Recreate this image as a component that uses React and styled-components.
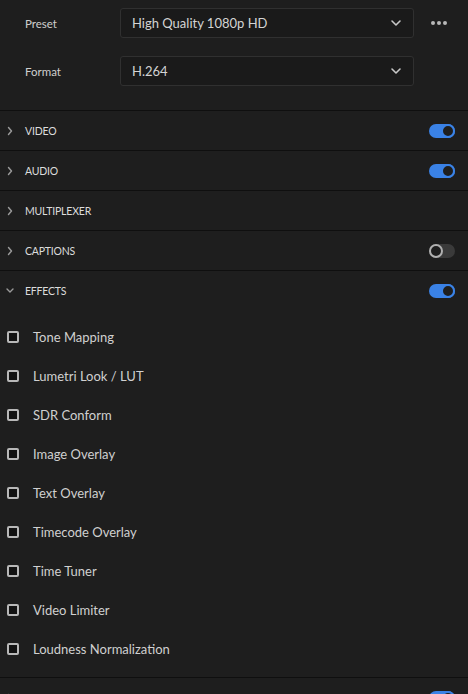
import React from 'react';
import styled, { createGlobalStyle } from 'styled-components';

const GlobalStyle = createGlobalStyle`
    html, body {
        margin: 0;
        padding: 0;
        background: #1e1e1e;
    }
    body {
        font-family: 'Lato', 'Open Sans', sans-serif;
        color: #d6d6d6;
    }
`;

const sections = [
    { name: 'VIDEO', toggle: true, on: true },
    { name: 'AUDIO', toggle: true, on: true },
    { name: 'MULTIPLEXER', toggle: false },
    { name: 'CAPTIONS', toggle: true, on: false },
];

const effects = [
    'Tone Mapping',
    'Lumetri Look / LUT',
    'SDR Conform',
    'Image Overlay',
    'Text Overlay',
    'Timecode Overlay',
    'Time Tuner',
    'Video Limiter',
    'Loudness Normalization',
];

const Chevron = ({ down }) => (
    <svg width="8" height="10" viewBox="0 0 8 10">
        {down
            ? <path d="M1 3l3 3 3-3" fill="none" stroke="#9a9a9a" strokeWidth="1.4" strokeLinecap="round" strokeLinejoin="round" />
            : <path d="M2.5 1.5l3 3.5-3 3.5" fill="none" stroke="#9a9a9a" strokeWidth="1.4" strokeLinecap="round" strokeLinejoin="round" />}
    </svg>
);

const SelectCaret = () => (
    <svg width="12" height="8" viewBox="0 0 12 8">
        <path d="M2 2l4 4 4-4" fill="none" stroke="#c8c8c8" strokeWidth="1.6" strokeLinecap="round" strokeLinejoin="round" />
    </svg>
);

const Dots = () => (
    <svg width="18" height="6" viewBox="0 0 18 6">
        <circle cx="3" cy="3" r="2" fill="#b8b8b8" />
        <circle cx="9" cy="3" r="2" fill="#b8b8b8" />
        <circle cx="15" cy="3" r="2" fill="#b8b8b8" />
    </svg>
);

const Field = ({ label, value, more }) => (
    <FieldRow>
        <FieldLabel>{label}</FieldLabel>
        <Select>
            <span>{value}</span>
            <SelectCaret />
        </Select>
        <More>{more && <Dots />}</More>
    </FieldRow>
);

const Section = ({ name, toggle, on, open }) => (
    <SectionHeader>
        <ChevronBox><Chevron down={open} /></ChevronBox>
        <SectionTitle>{name}</SectionTitle>
        {toggle && <Toggle $on={on}><Knob $on={on} /></Toggle>}
    </SectionHeader>
);

const App = () => {
    return (
        <>
            <GlobalStyle />
            <Panel>
                <Fields>
                    <Field label="Preset" value="High Quality 1080p HD" more />
                    <Field label="Format" value="H.264" />
                </Fields>
                {sections.map((s) => (
                    <Section key={s.name} {...s} />
                ))}
                <Section name="EFFECTS" toggle on open />
                <EffectList>
                    {effects.map((e) => (
                        <EffectItem key={e}>
                            <CheckBox />
                            <EffectLabel>{e}</EffectLabel>
                        </EffectItem>
                    ))}
                </EffectList>
                <Section name="" toggle on />
            </Panel>
        </>
    );
};

const Panel = styled.div`
    width: 468px;
    height: 694px;
    overflow: hidden;
    background: #1e1e1e;
`;

const Fields = styled.div`
    display: flex;
    flex-direction: column;
    gap: 18px;
    padding: 8px 0 24px 25px;
`;

const FieldRow = styled.div`
    display: flex;
    align-items: center;
    height: 30px;
`;

const FieldLabel = styled.div`
    width: 95px;
    font-size: 11.5px;
    color: #cfcfcf;
`;

const Select = styled.div`
    width: 294px;
    height: 30px;
    box-sizing: border-box;
    border: 1px solid #303030;
    border-radius: 3px;
    background: #1a1a1a;
    display: flex;
    align-items: center;
    justify-content: space-between;
    padding: 0 11px 0 11px;
    font-size: 13px;
    color: #d4d4d4;
`;

const More = styled.div`
    width: 50px;
    display: flex;
    justify-content: center;
    align-items: center;
`;

const SectionHeader = styled.div`
    display: flex;
    align-items: center;
    height: 39px;
    border-top: 1px solid #0f0f0f;
    padding: 0 13px 0 6px;
`;

const ChevronBox = styled.div`
    width: 19px;
    display: flex;
    align-items: center;
`;

const SectionTitle = styled.div`
    flex: 1;
    font-size: 10.5px;
    letter-spacing: -0.2px;
    color: #dcdcdc;
`;

const Toggle = styled.div`
    position: relative;
    width: 26px;
    height: 14px;
    border-radius: 7px;
    background: ${(p) => (p.$on ? '#3a82e6' : '#3a3a3a')};
`;

const Knob = styled.div`
    position: absolute;
    top: 0;
    left: ${(p) => (p.$on ? '12px' : '0')};
    width: 14px;
    height: 14px;
    box-sizing: border-box;
    border-radius: 50%;
    border: 2px solid ${(p) => (p.$on ? '#3a82e6' : '#b0b0b0')};
    background: #1e1e1e;
`;

const EffectList = styled.div`
    padding: 7px 0 9px 7px;
`;

const EffectItem = styled.div`
    display: flex;
    align-items: center;
    height: 39px;
`;

const CheckBox = styled.div`
    width: 12px;
    height: 12px;
    box-sizing: border-box;
    border: 2px solid #b8b8b8;
    border-radius: 2px;
    background: #121212;
    margin-right: 14px;
`;

const EffectLabel = styled.div`
    font-size: 13px;
    color: #d0d0d0;
`;

export default App;
